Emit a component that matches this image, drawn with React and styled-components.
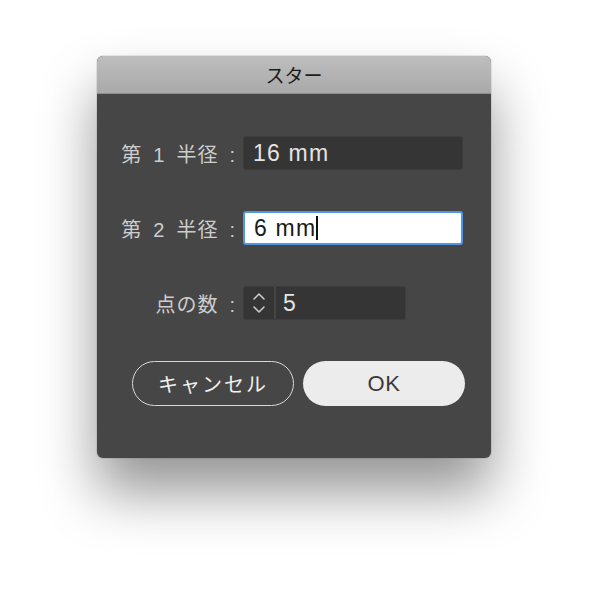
import React from 'react';
import styled, { createGlobalStyle } from 'styled-components';

const GlobalStyle = createGlobalStyle`
  html, body {
    margin: 0;
    padding: 0;
    background: #ffffff;
  }
  body {
    font-family: "Liberation Sans", "Noto Sans CJK JP", sans-serif;
  }
`;

const Page = styled.div`
  width: 589px;
  height: 600px;
  padding: 56px 0 0 97px;
  box-sizing: border-box;
`;

const Dialog = styled.div`
  width: 394px;
  height: 402px;
  border-radius: 6px;
  overflow: hidden;
  background: #464646;
  box-shadow: 0 34px 56px rgba(0, 0, 0, 0.42), 0 0 0 1px rgba(0, 0, 0, 0.08);
  display: flex;
  flex-direction: column;
`;

const TitleBar = styled.div`
  height: 37px;
  flex: none;
  background: linear-gradient(#bebebe, #a9a9a9);
  border-bottom: 1px solid #8e8e8e;
  display: flex;
  align-items: center;
  justify-content: center;
  font-family: "Noto Sans CJK JP", sans-serif;
  font-size: 19px;
  color: #1c1c1c;
`;

const Body = styled.div`
  padding-top: 42px;
  display: flex;
  flex-direction: column;
`;

const Form = styled.div`
  display: grid;
  grid-template-columns: 140px 220px;
  column-gap: 6px;
  row-gap: 41px;
  align-items: center;
`;

const Label = styled.div`
  text-align: right;
  font-size: 20px;
  color: #cdcdcd;
  white-space: pre;
  letter-spacing: 1px;
  margin-right: 1px;
`;

const Field = styled.div`
  height: 34px;
  box-sizing: border-box;
  border-radius: 3px;
  display: flex;
  align-items: center;
  padding-left: ${p => (p.$spin ? 0 : '9px')};
  font-size: 23px;
  letter-spacing: 1.2px;
  background: ${p => (p.$focus ? '#ffffff' : '#353535')};
  border: ${p => (p.$focus ? '2px solid #4d97e6' : '1px solid #3d3d3d')};
  color: ${p => (p.$focus ? '#1a1a1a' : '#e4e4e4')};
  width: ${p => p.$w || '220px'};
  overflow: hidden;
`;

const Caret = styled.span`
  display: inline-block;
  width: 1.5px;
  height: 24px;
  background: #111;
`;

const Stepper = styled.div`
  width: 30px;
  height: 100%;
  flex: none;
  border-right: 2px solid #454545;
  display: flex;
  align-items: center;
  justify-content: center;
`;

const SpinValue = styled.span`
  padding-left: 7px;
`;

const Buttons = styled.div`
  margin-top: 41px;
  padding-left: 35px;
  display: flex;
  gap: 9px;
`;

const Button = styled.button`
  width: 162px;
  height: 45px;
  border-radius: 23px;
  box-sizing: border-box;
  font-family: inherit;
  font-size: ${p => (p.$primary ? '22px' : '20px')};
  letter-spacing: ${p => (p.$primary ? '0.5px' : '2px')};
  cursor: pointer;
  background: ${p => (p.$primary ? '#ececec' : 'transparent')};
  color: ${p => (p.$primary ? '#3a3a3a' : '#f0f0f0')};
  border: ${p => (p.$primary ? 'none' : '1.5px solid #d8d8d8')};
`;

const Chevrons = () => (
  <svg width="14" height="28" viewBox="0 0 14 28" fill="none" stroke="#d0d0d0" strokeWidth="1.5" strokeLinecap="round" strokeLinejoin="round">
    <path d="M2 10 L7 5 L12 10" />
    <path d="M2 18 L7 23 L12 18" />
  </svg>
);

export default function App() {
  return (
    <>
      <GlobalStyle />
      <Page>
        <Dialog>
          <TitleBar>スター</TitleBar>
          <Body>
            <Form>
              <Label>{'第\u20021\u2002半径\u2002:'}</Label>
              <Field>16 mm</Field>
              <Label>{'第\u20022\u2002半径\u2002:'}</Label>
              <Field $focus>6 mm<Caret /></Field>
              <Label>{'点の数\u2002:'}</Label>
              <Field $spin $w="163px">
                <Stepper><Chevrons /></Stepper>
                <SpinValue>5</SpinValue>
              </Field>
            </Form>
            <Buttons>
              <Button>キャンセル</Button>
              <Button $primary>OK</Button>
            </Buttons>
          </Body>
        </Dialog>
      </Page>
    </>
  );
}
